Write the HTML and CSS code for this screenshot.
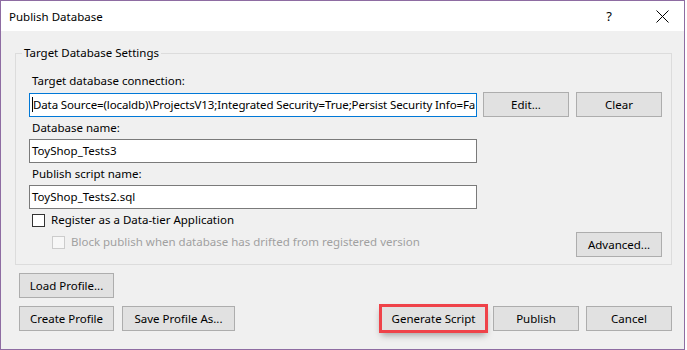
FILE: index.html
```html
<!DOCTYPE html>
<html lang="en">
<head>
  <meta charset="UTF-8">
  <meta name="viewport" content="width=device-width, initial-scale=1.0">
  <link rel="stylesheet" href="styles.css">
  <title>Publish Database</title>
</head>
<body>
  <div class="window">
    <div class="titlebar">
      <span class="title">Publish Database</span>
      <span class="help">?</span>
      <svg class="close" width="13" height="13" viewBox="0 0 13 13">
        <path d="M0.5 0.5 L12.5 12.5 M12.5 0.5 L0.5 12.5" stroke="#000" stroke-width="1"/>
      </svg>
    </div>

    <div class="main">
      <fieldset class="group">
        <legend>Target Database Settings</legend>

        <div class="label">Target database connection:</div>
        <div class="row">
          <div class="field focused"><span class="caret"></span><span class="conn">Data Source=(localdb)\ProjectsV13;Integrated Security=True;Persist Security Info=Fa</span></div>
          <button class="btn">Edit...</button>
          <button class="btn">Clear</button>
        </div>

        <div class="label">Database name:</div>
        <div class="row">
          <div class="field">ToyShop_Tests3</div>
        </div>

        <div class="label">Publish script name:</div>
        <div class="row">
          <div class="field">ToyShop_Tests2.sql</div>
        </div>

        <div class="check">
          <span class="box"></span>
          <span>Register as a Data-tier Application</span>
        </div>
        <div class="check-row">
          <div class="check sub disabled">
            <span class="box"></span>
            <span>Block publish when database has drifted from registered version</span>
          </div>
          <button class="btn">Advanced...</button>
        </div>
      </fieldset>

      <div class="profile-row">
        <button class="btn wide">Load Profile...</button>
      </div>
      <div class="actions">
        <button class="btn wide">Create Profile</button>
        <button class="btn wider">Save Profile As...</button>
        <span class="spacer"></span>
        <button class="btn generate">Generate Script</button>
        <button class="btn">Publish</button>
        <button class="btn">Cancel</button>
      </div>
    </div>
  </div>
</body>
</html>
```

FILE: styles.css
```css
*, *:before, *:after {
  box-sizing: border-box;
}

body {
  margin: 0;
  background: #ffffff;
  font-family: "Noto Sans", "Open Sans", sans-serif;
  font-size: 11.5px;
  color: #000000;
}

.window {
  width: 685px;
  height: 350px;
  border: 1px solid #8e6ca2;
  background: #f0f0f0;
  display: flex;
  flex-direction: column;
}

.titlebar {
  height: 30px;
  background: #ffffff;
  display: flex;
  align-items: center;
  padding: 0 15px 0 8px;
}

.title {
  flex: 1;
  font-size: 11.5px;
}

.help {
  font-size: 13px;
  margin-right: 44px;
}

.close {
  display: block;
}

.main {
  padding: 14px 12px 0 14px;
}

/* group box */
.group {
  margin: 0;
  border: 1px solid #dcdcdc;
  padding: 12px 9px 7px 13px;
}

.group legend {
  line-height: 16px;
  padding: 0 2px;
  margin-left: -7px;
}

.label {
  line-height: 16px;
  padding-left: 3px;
  margin-bottom: 3px;
}

.row {
  display: flex;
  align-items: flex-end;
  gap: 7px;
  margin-bottom: 3px;
}

.field {
  width: 448px;
  height: 24px;
  margin-right: -1px;
  background: #ffffff;
  border: 1px solid #7a7a7a;
  padding: 0 2px;
  line-height: 22px;
  white-space: nowrap;
  overflow: hidden;
}

.field.focused {
  border-color: #0078d7;
}

.conn {
  letter-spacing: -0.12px;
}

.caret {
  display: inline-block;
  width: 1px;
  height: 15px;
  background: #000000;
  vertical-align: -3px;
}

.btn {
  width: 86px;
  height: 25px;
  margin: 0;
  padding: 0;
  background: #e1e1e1;
  border: 1px solid #adadad;
  font-family: inherit;
  font-size: inherit;
  color: #000000;
}

.btn.wide {
  width: 95px;
}

.btn.wider {
  width: 113px;
}

.btn.generate {
  width: 105px;
  outline: 3px solid #ef4249;
  outline-offset: -1px;
  box-shadow: 0 4px 7px rgba(0,0,0,0.35);
}

/* checkboxes */
.check {
  display: flex;
  align-items: center;
  gap: 6px;
  line-height: 16px;
  margin: 3px 0 0 3px;
}

.box {
  width: 13px;
  height: 13px;
  border: 1px solid #333333;
  background: #ffffff;
}

.check-row {
  display: flex;
  justify-content: space-between;
  align-items: flex-start;
  margin-top: 4px;
}

.check.sub {
  margin: 2px 0 0 23px;
}

.check.disabled {
  color: #a0a0a0;
}

.check.disabled .box {
  border-color: #cccccc;
  background: #f7f7f7;
}

/* bottom buttons */
.profile-row {
  margin: 8px 0 0 4px;
}

.actions {
  display: flex;
  gap: 7px;
  margin: 8px 0 0 4px;
}

.actions .wider {
  margin-left: 1px;
}

.spacer {
  flex: 1;
}
```
